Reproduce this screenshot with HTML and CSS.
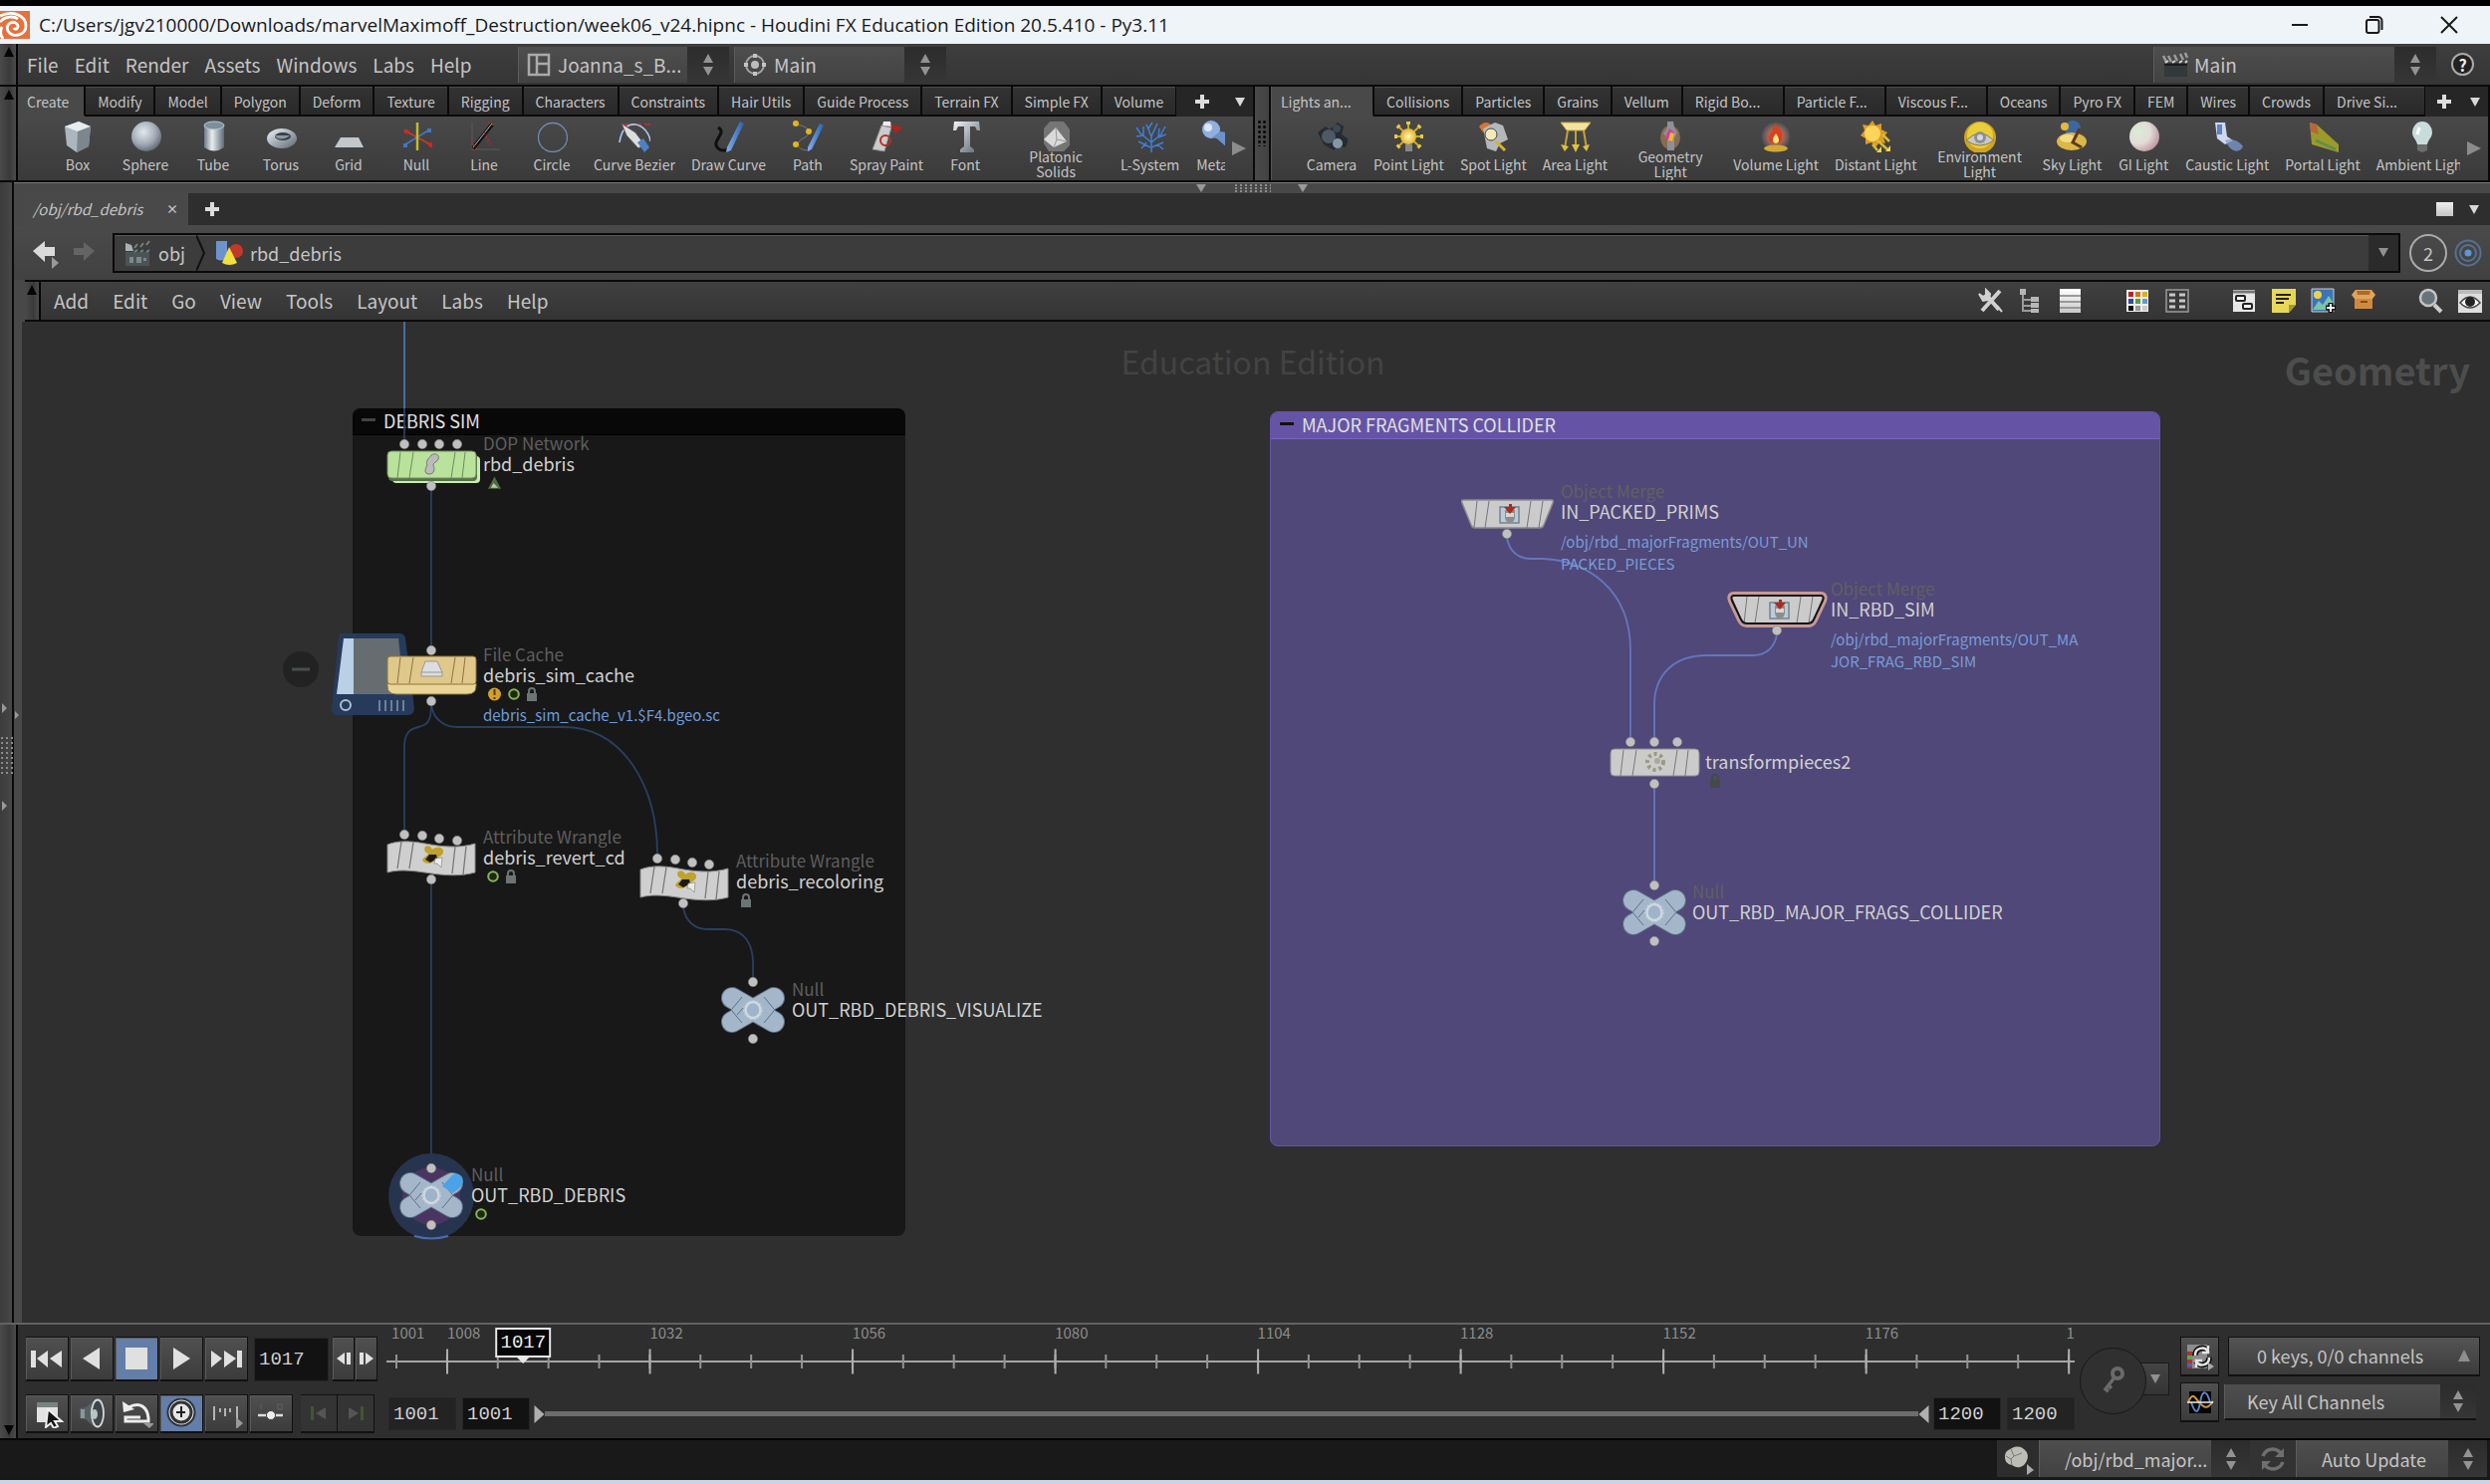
FILE: index.html
```html
<!DOCTYPE html>
<html lang="en">
<head>
<meta charset="utf-8">
<title>Houdini FX Education Edition</title>
<link rel="stylesheet" href="styles.css">
</head>
<body>
<svg class="defs" aria-hidden="true">
  <defs>
    <linearGradient id="gSteel" x1="0" y1="0" x2="1" y2="1"><stop offset="0" stop-color="#f2f4f6"/><stop offset=".5" stop-color="#a4adb6"/><stop offset="1" stop-color="#5d666f"/></linearGradient>
    <radialGradient id="gBall" cx=".4" cy=".35" r=".7"><stop offset="0" stop-color="#e3e8ee"/><stop offset=".6" stop-color="#a0a9b4"/><stop offset="1" stop-color="#5c646e"/></radialGradient>
    <linearGradient id="gTube" x1="0" x2="1"><stop offset="0" stop-color="#6d7a86"/><stop offset=".4" stop-color="#e8eef2"/><stop offset="1" stop-color="#5e6a76"/></linearGradient>
    <linearGradient id="gPen" x1="0" x2="1"><stop offset="0" stop-color="#7fb0ee"/><stop offset="1" stop-color="#2c5fae"/></linearGradient>
    <radialGradient id="gSun" r=".6"><stop offset="0" stop-color="#fff6b0"/><stop offset="1" stop-color="#dca818"/></radialGradient>
    <radialGradient id="gGlow" r=".5"><stop offset="0" stop-color="#ffe0a0"/><stop offset=".5" stop-color="#c86a50" stop-opacity=".8"/><stop offset="1" stop-color="#99a" stop-opacity="0"/></radialGradient>
    <radialGradient id="gGi" cx=".3" cy=".35" r=".8"><stop offset="0" stop-color="#dcebd6"/><stop offset=".5" stop-color="#e2dcd8"/><stop offset="1" stop-color="#b78c92"/></radialGradient>
    <linearGradient id="gPage" x1="0" y1="0" x2="0" y2="1"><stop offset="0" stop-color="#fff"/><stop offset="1" stop-color="#c8c8c8"/></linearGradient>
    <symbol id="updown" viewBox="0 0 12 24"><path d="M1 10L6 1l5 9z M1 14l5 9 5-9z" fill="#939393"/></symbol>
    <symbol id="slate" viewBox="0 0 28 28"><path d="M3 12h23v14H3z" fill="#33393a"/><path d="M3 14h23" stroke="#1c1c1c" stroke-width="2"/><path d="M2 5l3 6M7 5l3 6M13 4l3 6M19 3l3 6M24 2l2 5" stroke="#9c9c9c" stroke-width="2.500"/><path d="M4 12l3-2M11 12l3-2M18 12l3-2M24 12l2-2" stroke="#d2d2d2" stroke-width="2"/></symbol>
    <symbol id="scene" viewBox="0 0 28 28"><path d="M2 13h24v14H2z" fill="#4a5355"/><path d="M6 18h4v6H6zM13 18h5v6h-5zM20 19h3v3h-3z" fill="#7e888b"/><path d="M2 4l6 2 2 6H2z" fill="#a9b1b4"/><path d="M11 9l3-4M17 8l3-4M23 6l3-4M11 13l3-2M17 13l3-2M23 13l3-2" stroke="#77807f" stroke-width="2"/></symbol>
    <symbol id="lock" viewBox="0 0 12 14"><path d="M3 7V4a3 3 0 0 1 6 0v3" fill="none" stroke="currentColor" stroke-width="2"/><path d="M1 6h10v8H1z" fill="currentColor"/></symbol>
    <symbol id="ring" viewBox="0 0 12 14"><circle cx="6" cy="7" r="4.800" fill="#1d2a12" stroke="#87b45a" stroke-width="2"/></symbol>
    <g id="dot"><circle r="4.700" fill="#c0c0c0" stroke="#777" stroke-width=".5"/></g>
    <g id="nullnode">
      <path d="M-21-12L21 12M-21 12L21-12" stroke="#5d7186" stroke-width="22" stroke-linecap="round"/>
      <path d="M-21-12L21 12M-21 12L21-12" stroke="#a4b6ca" stroke-width="20" stroke-linecap="round"/>
      <path d="M-21-1l10-12M-16 5l6-7M21-1l-10-12M-21 1l10 12M21 1l-10 12" stroke="#5d7186" stroke-width="1"/>
      <ellipse rx="7.500" ry="8" fill="#9db4cb" stroke="#d0d8df" stroke-width="2.500"/>
      <circle r="9.500" fill="none" stroke="#c4ced8" stroke-width="1" stroke-dasharray="2 2"/>
    </g>
    <g id="plate">
      <path d="M0 3C10-1 22-1 38 2s34 5 50 0v29c-14 4-30 3-44 1S14 27 0 31z" fill="#cfcfcf" stroke="#888" stroke-width="1"/>
      <path d="M14 0l-4 27M26 1l-4 26M68 5l-3 27M79 5l-3 28" stroke="#777" stroke-width="1.300"/>
      <path d="M38 5c3-2 6 0 7 3 5-4 12-2 11 3-1 4-6 4-8 7-3 5-10 5-13 1 1-4 5-4 6-7-3-1-5-4-3-7z" fill="#bfa12c"/><path d="M38 18l4-5 7 0 1 4-7 4z" fill="#1c1a10"/><path d="M48 17l7-1-1 10-4-4-3 0z" fill="#ececec" stroke="#888" stroke-width=".7"/>
    </g>
    <g id="merge">
      <path d="M2 0h89q2 0 1 3l-9 22q-1 3-4 3H14q-3 0-4-3L1 3Q0 0 2 0z" fill="#cbcbcb" stroke="#8c8c8c" stroke-width="1.500"/>
      <path d="M16 1l-3 27M28 1l-4 27M70 1l-4 27M82 1l-4 27" stroke="#777"/>
      <path d="M39 7h19v16H39z" fill="#bccbd4" stroke="#6f8794" stroke-width="1.500"/><path d="M44 10h10v8q-1 5-5 5t-5-5z" fill="#8d8d8d"/><path d="M45 13h8v4h-8z" fill="#d6d6d6"/><path d="M48 4v3h-5l6 7 6-7h-4V4z" fill="#b3281c"/>
    </g>
  </defs>
</svg>

<header class="titlebar">
  <svg class="app-logo" viewBox="0 0 30 28"><path d="M0 0h30v28H0z" fill="#e8703a"/><path d="M0 5C12-1 26 4 26 15c0 9-13 13-18 5-3-7 5-11 9-7 3 4-2 7-3 4M0 11c5-6 14-6 18-3M3 28c-3-4-3-8-1-12" fill="none" stroke="#fff" stroke-width="2.800"/></svg>
  <h1>C:/Users/jgv210000/Downloads/marvelMaximoff_Destruction/week06_v24.hipnc - Houdini FX Education Edition 20.5.410 - Py3.11</h1>
  <div class="window-buttons">
    <button aria-label="Minimize"><svg viewBox="0 0 18 18"><path d="M1 9h16"/></svg></button>
    <button aria-label="Restore"><svg viewBox="0 0 18 18"><rect x="1" y="4" width="12.500" height="13" rx="2"/><path d="M4 1h8.500a4 4 0 0 1 4 4v9"/></svg></button>
    <button aria-label="Close"><svg viewBox="0 0 18 18"><path d="M1 1l16 16M17 1L1 17"/></svg></button>
  </div>
</header>

<div class="row mainmenu">
  <div class="strip"><svg viewBox="0 0 10 10"><path d="M0 10L5 0l5 10z"/></svg></div>
  <nav class="menu"><button>File</button><button>Edit</button><button>Render</button><button>Assets</button><button>Windows</button><button>Labs</button><button>Help</button></nav>
  <div class="combo desktop">
    <svg class="ico24" viewBox="0 0 24 24"><path d="M2 2h20v20H2zM10 2v20M10 11h12" fill="none" stroke="#aaa" stroke-width="2.500"/></svg>
    <select aria-label="Desktop"><option>Joanna_s_B...</option></select><i><svg><use href="#updown"/></svg></i>
  </div>
  <div class="combo radial">
    <svg class="ico24" viewBox="0 0 24 24"><circle cx="12" cy="12" r="9" fill="none" stroke="#a8a8a8" stroke-width="1.800"/><circle cx="12" cy="12" r="4" fill="#bbb"/><path d="M12 1v4M12 19v4M1 12h4M19 12h4" stroke="#c4c4c4" stroke-width="4"/></svg>
    <select aria-label="Radial menu"><option>Main</option></select><i><svg><use href="#updown"/></svg></i>
  </div>
  <div class="combo take">
    <svg class="ico28"><use href="#slate"/></svg>
    <select aria-label="Take"><option>Main</option></select><i><svg><use href="#updown"/></svg></i>
  </div>
  <button class="help" aria-label="Help">?</button>
</div>

<div class="row shelves">
  <div class="strip"><svg viewBox="0 0 10 10"><path d="M0 10L5 0l5 10z"/></svg></div>
  <section class="shelf left">
    <div class="tabs">
      <button class="on">Create</button><button>Modify</button><button>Model</button><button>Polygon</button><button>Deform</button><button>Texture</button><button>Rigging</button><button>Characters</button><button>Constraints</button><button>Hair Utils</button><button>Guide Process</button><button>Terrain FX</button><button>Simple FX</button><button>Volume</button>
      <button class="add" aria-label="Add shelf"><svg viewBox="0 0 16 16"><path d="M8 1v14M1 8h14"/></svg></button><button class="more" aria-label="Shelf menu"><svg viewBox="0 0 10 9"><path d="M0 0h10L5 9z"/></svg></button>
    </div>
    <div class="tools">
      <div class="toolrow">
        <button><svg viewBox="0 0 32 32"><path d="M3 6l14-5 12 5-2 20-12 6L5 25z" fill="#aeb6bd"/><path d="M3 6l14-5 12 5-13 5z" fill="#e8ecef"/><path d="M16 11l13-5-2 20-12 6z" fill="#7c868e"/></svg><span>Box</span></button>
        <button><svg viewBox="0 0 32 32"><circle cx="17" cy="16" r="15" fill="url(#gBall)"/></svg><span>Sphere</span></button>
        <button><svg viewBox="0 0 32 32"><path d="M7 5v22q10 7 20 0V5z" fill="url(#gTube)"/><ellipse cx="17" cy="5" rx="10" ry="4" fill="#7d8f9d" stroke="#bcc9d2"/></svg><span>Tube</span></button>
        <button><svg viewBox="0 0 32 32"><ellipse cx="17" cy="18" rx="15" ry="10" fill="url(#gSteel)"/><ellipse cx="18" cy="16" rx="8" ry="4" fill="#3a4048"/><path d="M10 15c3 6 12 3 15 0" fill="#8f99a4"/></svg><span>Torus</span></button>
        <button><svg viewBox="0 0 32 32"><path d="M8 17h18l5 10H2z" fill="#c3c7ca"/></svg><span>Grid</span></button>
        <button><svg viewBox="0 0 32 32"><path d="M6 11l24 13" stroke="#c93a2c" stroke-width="1.800"/><path d="M5 24L28 10" stroke="#3f78c8" stroke-width="1.800"/><path d="M17 2v28" stroke="#c2ba28" stroke-width="2.500"/><path d="M4 10l4 2M29 23l3 3" stroke="#d8281c" stroke-width="4"/><path d="M3 25h4M27 10h4" stroke="#3f78c8" stroke-width="4"/></svg><span>Null</span></button>
        <button><svg viewBox="0 0 32 32"><path d="M4 2v27h28" stroke="#5a5a5a" fill="none"/><path d="M5 28L24 4" stroke="#111" stroke-width="4"/><path d="M5 27L24 3" stroke="#bbb" stroke-width="1"/><path d="M3 21l6 8M16 12l7 13M20 2l7 3" stroke="#b42a24" stroke-width="1.500" stroke-dasharray="2 2"/></svg><span>Line</span></button>
        <button><svg viewBox="0 0 32 32"><circle cx="17" cy="17" r="14.500" fill="none" stroke="#7289b4" stroke-width="1.300"/></svg><span>Circle</span></button>
        <button><svg viewBox="0 0 32 32"><path d="M4 4h28" stroke="#c03028" stroke-width="1.500" stroke-dasharray="8 3"/><path d="M1 22C3 8 10 3 17 4s14 8 15 17" fill="none" stroke="#a9c8f0" stroke-width="1.600"/><path d="M3 3l14 9 9 12-6 4L8 15z" fill="#ddd" stroke="#555"/><path d="M19 22l6-4 6 9-5 5z" fill="#4d80c8"/></svg><span>Curve Bezier</span></button>
        <button><svg viewBox="0 0 32 32"><path d="M6 7c10 6-8 13 0 21 3 3 6 2 9 2" fill="none" stroke="#101010" stroke-width="3"/><path d="M28 1l4 2-13 27-5 2 1-5z" fill="url(#gPen)"/></svg><span>Draw Curve</span></button>
        <button><svg viewBox="0 0 32 32"><path d="M5 4c16 3 14 10 8 13-11 5-8 13 4 13" fill="none" stroke="#777"/><circle cx="4" cy="3" r="3" fill="#e3b51d"/><circle cx="17" cy="11" r="3" fill="#e3b51d"/><circle cx="4" cy="24" r="3" fill="#e3b51d"/><path d="M28 3l4 2-12 24-4 2v-4z" fill="url(#gPen)"/></svg><span>Path</span></button>
        <button><svg viewBox="0 0 32 32"><path d="M11 5l10 2-7 24-12-2z" fill="#ccc" stroke="#888"/><path d="M13 1h7l1 5-9-1z" fill="#eee"/><path d="M20 4l12 3-7 6z" fill="#b3211b"/><circle cx="15" cy="20" r="5" fill="none" stroke="#b3302a" stroke-width="2"/></svg><span>Spray Paint</span></button>
        <button><svg viewBox="0 0 32 32"><path d="M5 1h25l1 9h-3l-2-4h-5v20l4 3v3H11v-3l4-3V6H9l-2 4H4z" fill="url(#gSteel)"/></svg><span>Font</span></button>
        <button class="w114"><svg viewBox="0 0 32 32"><path d="M10 1h14l6 8v16l-6 6H9l-5-8V8z" fill="#757575"/><path d="M16 7l11 14-13 6-10-8z" fill="#dadada"/><path d="M16 7l1 12 10 2M17 19l-3 8" stroke="#999" fill="none"/></svg><span>Platonic<br>Solids</span></button>
        <button><svg viewBox="0 0 32 32"><path d="M17 32V14M17 22L5 12M17 22l11-9M17 16l-5-12M17 16l6-13M9 15l-7 1M9 15V6M24 17l8-3M24 17l1-9M16 27L4 21M17 27l12-5M14 8l4-6M6 13L2 7M27 13l4-7M12 22l-5 6M23 24l6 5" stroke="#3f7fd8" stroke-width="1.500" fill="none"/></svg><span>L-System</span></button>
        <button class="w50"><svg viewBox="0 0 32 32"><circle cx="15" cy="9" r="9" fill="#8fb0e0"/><circle cx="12" cy="7" r="4" fill="#dce8f8"/><path d="M16 17c6 0 8 5 14 9V12l-6-1z" fill="#6d92cc"/></svg><span>Meta</span></button>
      </div>
      <button class="scroll" aria-label="Scroll tools"><svg viewBox="0 0 14 14"><path d="M0 0l14 7-14 7z"/></svg></button>
    </div>
  </section>
  <div class="gripbar"></div>
  <section class="shelf right">
    <div class="tabs">
      <button class="on elided">Lights an...</button><button>Collisions</button><button>Particles</button><button>Grains</button><button>Vellum</button><button class="elided">Rigid Bo...</button><button class="elided">Particle F...</button><button class="elided">Viscous F...</button><button>Oceans</button><button>Pyro FX</button><button>FEM</button><button>Wires</button><button>Crowds</button><button class="elided">Drive Si...</button>
      <button class="add" aria-label="Add shelf"><svg viewBox="0 0 16 16"><path d="M8 1v14M1 8h14"/></svg></button><button class="more" aria-label="Shelf menu"><svg viewBox="0 0 10 9"><path d="M0 0h10L5 9z"/></svg></button>
    </div>
    <div class="tools">
      <div class="toolrow">
        <button><svg viewBox="0 0 32 32"><path d="M2 12l8-6 4 3 8-7 6 4-2 8 7 5-3 8-8-1-4 4-10-6z" fill="#242b33"/><circle cx="13" cy="16" r="7" fill="#4d5964"/><circle cx="22" cy="23" r="5" fill="#8398a6"/><circle cx="21" cy="8" r="4" fill="#3d4852"/></svg><span>Camera</span></button>
        <button><svg viewBox="0 0 32 32"><path d="M16 2v28M3 16h27M6 6l21 20M27 6L6 26" stroke="#cda92a" stroke-width="2"/><path d="M16 1v3M2 16h3M28 16h3M5 5l2 2M28 5l-2 2M5 27l2-2M28 27l-2-2" stroke="#e6c84a" stroke-width="4"/><circle cx="16" cy="16" r="8" fill="url(#gSun)"/><path d="M13 24h7v7h-7z" fill="#888"/></svg><span>Point Light</span></button>
        <button><svg viewBox="0 0 32 32"><path d="M2 6q6-7 12-2l-8 8z" fill="#d8742a"/><path d="M6 8l12-6 8 3 5 14-8 4-4 8-9-3z" fill="#b5b8ba"/><circle cx="14" cy="14" r="6" fill="#f5e9b8" stroke="#444"/><path d="M19 21l9 9" stroke="#d7b425" stroke-width="3"/></svg><span>Spot Light</span></button>
        <button><svg viewBox="0 0 32 32"><path d="M2 2h30l-6 8H8z" fill="#f4e3a0" stroke="#c8a23a"/><path d="M9 10L6 28M17 10v20M25 10l3 18" stroke="#c1a336" stroke-width="2"/><path d="M2 24l4 7 4-5zM13 24l4 8 4-8zM24 26l4 5 3-7z" fill="#e0c13a"/></svg><span>Area Light</span></button>
        <button class="w110"><svg viewBox="0 0 32 32"><ellipse cx="16" cy="17" rx="10" ry="12" fill="#b3895e" opacity=".6"/><path d="M13 1h6l1 6 3 5-3 6v12h-7V18l-4-5 4-6z" fill="#8f8f98"/><path d="M15 8l5 4-3 10-6-5z" fill="#d63f9a"/><path d="M16 12l4 1-2 8-4-1z" fill="#f0b92a"/></svg><span>Geometry<br>Light</span></button>
        <button><svg viewBox="0 0 32 32"><circle cx="16" cy="16" r="15" fill="url(#gGlow)"/><path d="M15 3c6 6 9 11 7 16-1 5-11 6-13 0-1-6 5-8 6-16z" fill="#d8401e"/><path d="M16 13c3 4 5 9 0 10-5-1-3-6 0-10z" fill="#fbe082"/><ellipse cx="16" cy="28" rx="12" ry="3.500" fill="#d5a835"/></svg><span>Volume Light</span></button>
        <button><svg viewBox="0 0 32 32"><path d="M13 0l3 5 6-2v6l6 3-4 5 2 6-6-1-4 5-4-5-6 2v-6l-5-3 4-5-2-6 6 1z" fill="#dd9d22"/><circle cx="13" cy="13" r="8" fill="#ffd45a"/><path d="M23 14l7 7M18 20l10 9M13 24l5 6" stroke="#d9bd32" stroke-width="2.500"/><path d="M26 31h5v-6zM17 32h5v-6z" fill="#eed552"/></svg><span>Distant Light</span></button>
        <button class="w110"><svg viewBox="0 0 32 32"><circle cx="16" cy="17" r="16" fill="#cfa420"/><circle cx="16" cy="15" r="13" fill="#e8cf3a"/><path d="M2 20q14-14 28 0-14 10-28 0z" fill="#c9c9c9" stroke="#8a7a30"/><circle cx="16" cy="17" r="6" fill="#8e8e96"/><circle cx="16" cy="17" r="3" fill="#d2d8e0"/></svg><span>Environment<br>Light</span></button>
        <button><svg viewBox="0 0 32 32"><circle cx="17" cy="8" r="8" fill="#3b68a2"/><circle cx="9" cy="6" r="4" fill="#e8b93a"/><ellipse cx="16" cy="21" rx="15" ry="9" fill="#dbb648"/><ellipse cx="12" cy="18" rx="8" ry="4" fill="#f3dc86"/><path d="M24 8l-7 14 9 5" stroke="#5d3a1c" stroke-width="3" fill="none"/></svg><span>Sky Light</span></button>
        <button><svg viewBox="0 0 32 32"><circle cx="17" cy="16" r="15" fill="url(#gGi)"/></svg><span>GI Light</span></button>
        <button><svg viewBox="0 0 32 32"><path d="M4 2h10l2 14 6 4-8 4-8-6z" fill="#cdd9f0"/><path d="M6 4h5v10H6z" fill="#5e80c8"/><path d="M14 20c8-3 15 2 18 6-3 7-12 7-18-6z" fill="#7e9bd0" opacity=".75"/></svg><span>Caustic Light</span></button>
        <button><svg viewBox="0 0 32 32"><path d="M3 2l7 2 22 20v8L5 24z" fill="#9c9a2a"/><path d="M3 2l7 2 2 10-8-3z" fill="#b5673a"/><path d="M9 20l20 9" stroke="#5f8f4a" stroke-width="3"/></svg><span>Portal Light</span></button>
        <button><svg viewBox="0 0 32 32"><path d="M6 12a10 11 0 0 1 20 0c0 5-4 7-5 12h-10c-1-5-5-7-5-12z" fill="#c9dcdc"/><path d="M13 7l-2 7" stroke="#fff" stroke-width="3"/><path d="M11 24h10v6l-5 2-5-2z" fill="#6c6c6c"/></svg><span>Ambient Light</span></button>
      </div>
      <button class="scroll" aria-label="Scroll tools"><svg viewBox="0 0 14 14"><path d="M0 0l14 7-14 7z"/></svg></button>
    </div>
  </section>
</div>

<main class="work">
  <aside class="edge">
    <svg viewBox="0 0 22 120"><path d="M2 10l5 5-5 5zM15 18l4 4-4 4zM2 108l5 5-5 5z" fill="#999"/><path d="M1 45h12M1 50h12M1 55h12M1 60h12M1 65h12M1 70h12M1 75h12M1 80h12" stroke="#8a8a8a" stroke-width="2" stroke-dasharray="2 3"/></svg>
  </aside>
  <section class="pane">
    <div class="splitter"><svg viewBox="0 0 112 10"><path d="M0 1h10L5 9zM102 1h10l-5 8z" fill="#999"/><path d="M39 2h36M39 5h36M39 8h36" stroke="#8d8d8d" stroke-width="2" stroke-dasharray="2 3"/></svg></div>
    <div class="panetabs">
      <button class="panetab"><em>/obj/rbd_debris</em><b>×</b></button>
      <button class="add" aria-label="New tab"><svg viewBox="0 0 16 16"><path d="M8 1v14M1 8h14"/></svg></button>
      <span class="grow"></span>
      <button class="maxi" aria-label="Maximize pane"></button><button class="more" aria-label="Pane menu"><svg viewBox="0 0 10 9"><path d="M0 0h10L5 9z"/></svg></button>
    </div>
    <div class="pathbar">
      <button class="nav" aria-label="Back"><svg viewBox="0 0 32 32"><path d="M1 14L13 4v6h10v9H13v6z" fill="#dadada"/><path d="M20 20l7 6-7 6z" fill="#999"/></svg></button>
      <button class="nav" aria-label="Forward"><svg viewBox="0 0 32 32"><path d="M22 14L11 5v6H1v7h10v6z" fill="#646464"/></svg></button>
      <div class="path">
        <svg class="ico28"><use href="#scene"/></svg><a href="#obj">obj</a>
        <svg class="chev" viewBox="0 0 10 36"><path d="M0 0l8 18-8 18" fill="none" stroke="#111" stroke-width="2"/></svg>
        <svg class="ico28" viewBox="0 0 28 28"><path d="M1 2h11v18q-6 3-11 0z" fill="#6d93cf"/><circle cx="21" cy="12" r="7" fill="#c0392b"/><path d="M14 8l8 16q-8 4-15 0z" fill="#efe03c"/></svg><a href="#rbd_debris">rbd_debris</a>
        <button class="drop" aria-label="Path history"><svg viewBox="0 0 10 9"><path d="M0 0h10L5 9z"/></svg></button>
      </div>
      <button class="count" aria-label="Link group">2</button>
      <button class="target" aria-label="Follow selection"><svg viewBox="0 0 28 28"><circle cx="14" cy="14" r="12.500" fill="none" stroke="#56718f" stroke-width="2"/><circle cx="14" cy="14" r="8" fill="none" stroke="#56718f" stroke-width="2"/><circle cx="14" cy="14" r="3.500" fill="#5a96d8"/></svg></button>
    </div>
    <div class="netmenu">
      <div class="strip"><svg viewBox="0 0 10 10"><path d="M0 10L5 0l5 10z"/></svg></div>
      <nav class="menu wide"><button>Add</button><button>Edit</button><button>Go</button><button>View</button><button>Tools</button><button>Layout</button><button>Labs</button><button>Help</button></nav>
      <div class="neticons">
        <button aria-label="Tools"><svg viewBox="0 0 26 26"><path d="M4 23L22 3M9 8l12 14" stroke="#d0d0d0" stroke-width="4"/><path d="M1 6l4 3 3-2 0-5 4 4-1 6-6 1zM19 18l5 6" fill="#d0d0d0" stroke="#d0d0d0" stroke-width="2"/></svg></button>
        <button aria-label="Tree"><svg viewBox="0 0 26 26"><path d="M5 4v19h8M5 12h8M5 18h8" stroke="#9a9a9a" stroke-width="2" fill="none"/><path d="M2 1h6v6H2zM13 9h8v5h-8zM13 15h8v5h-8zM13 21h8v4h-8z" fill="#b6b6b6"/></svg></button>
        <button aria-label="List"><svg viewBox="0 0 26 26"><path d="M2 1h21v24H2z" fill="url(#gPage)"/><path d="M2 8h21M2 14h21M2 20h21" stroke="#999" stroke-width="2"/></svg></button>
        <button class="gap" aria-label="Palette"><svg viewBox="0 0 26 26"><path d="M2 2h22v22H2z" fill="#eee"/><path d="M4 4h5v5H4z" fill="#b52828"/><path d="M11 4h5v5h-5z" fill="#d8731e"/><path d="M18 4h5v5h-5z" fill="#d6b324"/><path d="M4 11h5v5H4z" fill="#2a4bb0"/><path d="M11 11h5v5h-5z" fill="#4fa33a"/><path d="M18 11h5v5h-5z" fill="#5e9cd8"/><path d="M4 18h5v5H4z" fill="#111"/><path d="M11 18h5v5h-5z" fill="#999"/><path d="M18 18h5v5h-5z" fill="#ccc"/></svg></button>
        <button aria-label="Shapes"><svg viewBox="0 0 26 26"><path d="M2 2h22v22H2z" fill="#3a3a3a" stroke="#9a9a9a" stroke-width="1.500"/><path d="M5 7h6M15 7h6M5 13h6M15 13h6M5 19h6M15 19h6" stroke="#c8c8c8" stroke-width="3"/></svg></button>
        <button class="gap" aria-label="Network box"><svg viewBox="0 0 26 26"><path d="M2 2h22v22H2z" fill="#e8e8e8"/><path d="M2 4h22" stroke="#777" stroke-width="3"/><rect x="5" y="8" width="9" height="5" rx="1" fill="#fff" stroke="#222" stroke-width="2"/><rect x="12" y="16" width="9" height="5" rx="1" fill="#fff" stroke="#222" stroke-width="2"/></svg></button>
        <button aria-label="Sticky note"><svg viewBox="0 0 26 26"><path d="M1 1h24v16l-7 8H1z" fill="#e6d858"/><path d="M18 25v-8h7z" fill="#a8963a"/><path d="M5 7h15M5 11h13M5 15h8" stroke="#222" stroke-width="2"/></svg></button>
        <button aria-label="Background image"><svg viewBox="0 0 26 26"><path d="M1 1h22v23H1z" fill="#3c74b8" stroke="#ccc"/><circle cx="7" cy="7" r="4" fill="#ecd34a"/><path d="M2 22l6-9 4 4 6-9 5 8v6z" fill="#79c5a8"/><path d="M20 15v10M15 20h10" stroke="#111" stroke-width="5"/><path d="M20 16v8M16 20h8" stroke="#fff" stroke-width="2"/></svg></button>
        <button aria-label="Asset box"><svg viewBox="0 0 26 26"><path d="M4 8h18v13H4z" fill="#d08a3e"/><path d="M1 7l4-5h16l4 5-3 4H4z" fill="#e2a45c"/><path d="M6 3h14l-1 4H7z" fill="#a86c2c"/><path d="M10 14h7" stroke="#7c4d1c" stroke-width="2"/></svg></button>
        <button class="gap" aria-label="Find"><svg viewBox="0 0 26 26"><path d="M17 17l7 7" stroke="#ccc" stroke-width="4"/><circle cx="11" cy="10" r="8" fill="#69737c" stroke="#c4c4c4" stroke-width="2.500"/></svg></button>
        <button aria-label="Display options"><svg viewBox="0 0 26 26"><path d="M1 2h24v23H1z" fill="#dedede"/><path d="M1 2h24v4H1z" fill="#bbb"/><path d="M3 15q10-12 20 0-10 10-20 0z" fill="#fff" stroke="#444" stroke-width="1.500"/><circle cx="13" cy="14" r="5" fill="#222"/></svg></button>
      </div>
    </div>

    <div class="canvas">
      <div class="watermark center">Education Edition</div>
      <div class="watermark corner">Geometry</div>

      <section class="netbox debris"><h2><i></i>DEBRIS SIM</h2></section>
      <section class="netbox major"><h2><i></i>MAJOR FRAGMENTS COLLIDER</h2></section>

      <svg class="graph" viewBox="22 323 2478 1005">
        <circle cx="302" cy="672" r="18" fill="#222"/><path d="M293 672h18" stroke="#47504f" stroke-width="3"/>
        <g fill="none" stroke-width="1.800">
          <path d="M406 323v87" stroke="#4a76ad"/>
          <g stroke="#2a3f60">
            <path d="M406 410v33M433 491v158M433 886v284"/>
            <path d="M433 708c0 16-4 20-13 22-10 2-14 8-14 20v85"/>
            <path d="M433 708c2 14 13 22 26 22h107c60 0 94 60 94 128"/>
            <path d="M686 911c2 14 12 22 24 22h18c20 0 28 16 28 34v16"/>
          </g>
          <g stroke="#6575bd">
            <path d="M1513 540c2 12 10 21 24 21h12c44 2 88 30 88 92v90"/>
            <path d="M1784 637c-2 12-10 21-24 21h-46c-34 0-53 20-53 50v35"/>
            <path d="M1661 791v94"/>
          </g>
        </g>
        <circle cx="433" cy="1201" r="43" fill="#26344f"/><path d="M416 1241q17 5 34 0-17 5-34 0z" fill="#4a6bb8" stroke="#4a6bb8" stroke-width="2"/><circle cx="433" cy="1201" r="29" fill="#4a3560"/>
        <g>
          <path d="M343 636h58q5 0 6 5l9 70q0 7-7 7h-70q-7 0-6-7l7-70q0-5 3-5z" fill="#263b5c"/>
          <path d="M346 641h54l6 56h-68z" fill="#666d70"/><path d="M345 641h10v56h-17z" fill="#b9d0e6"/>
          <ellipse cx="347" cy="708" rx="5" ry="5" fill="none" stroke="#a9bfd2" stroke-width="2"/>
          <path d="M381 703v11M387 703v11M393 703v11M399 703v11M405 703v11" stroke="#6e8095" stroke-width="2"/>
        </g>
        <g>
          <rect x="394" y="458" width="88" height="27" rx="4" fill="#c9eeb0"/>
          <rect x="390" y="455" width="89" height="28" rx="4" fill="#59704d"/>
          <rect x="389" y="453" width="89" height="27" rx="4" fill="#b9e29b" stroke="#6e8c5d"/>
          <path d="M402 454l-3 26M415 454l-4 26M457 454l-4 26M467 454l-3 26" stroke="#6e8c5d"/>
          <path d="M433 457c4-3 9 0 7 4-1 3-5 3-5 6 2 4 1 9-4 9-6 0-4-6-2-9-2-4 1-6 4-10z" fill="#bbb" stroke="#777"/>
        </g>
        <g>
          <path d="M389 686h89v3q0 8-9 8h-71q-9 0-9-8z" fill="#ead694" stroke="#8a7443"/>
          <rect x="389" y="659" width="89" height="28" rx="3" fill="#dfc88a" stroke="#8a7443"/>
          <path d="M402 660l-3 26M415 660l-4 26M457 660l-4 26M467 660l-3 26" stroke="#8a7443"/>
          <path d="M427 664h12l5 11v4h-21v-4z" fill="#ddd" stroke="#999"/><path d="M423 675h21" stroke="#999"/>
        </g>
        <use href="#plate" x="389" y="845"/><use href="#plate" x="643" y="870"/>
        <use href="#nullnode" x="756" y="1014"/><use href="#nullnode" x="433" y="1200"/>
        <path d="M444 1191l10-11q6-4 10 2 3 6-4 12l-5 4z" fill="#4aa3e8"/>
        <use href="#merge" x="1467" y="502"/>
        <path d="M1741 598h87q4 0 2 5l-9 19q-2 4-6 4h-61q-4 0-6-4l-9-19q-2-5 2-5z" fill="none" stroke="#c69a96" stroke-width="8"/>
        <use href="#merge" x="1738" y="598"/>
        <path d="M1741 598h87q4 0 2 5l-9 19q-2 4-6 4h-61q-4 0-6-4l-9-19q-2-5 2-5z" fill="none" stroke="#151515" stroke-width="2"/>
        <rect x="1617" y="752" width="89" height="27" rx="4" fill="#cbcbcb" stroke="#8c8c8c"/>
        <path d="M1630 753l-3 26M1643 753l-4 26M1684 753l-4 26M1695 753l-3 26" stroke="#777"/>
        <circle cx="1662" cy="765" r="8" fill="none" stroke="#9a9a80" stroke-width="4" stroke-dasharray="3 3"/><circle cx="1664" cy="764" r="3" fill="#aaa99c"/>
        <use href="#nullnode" x="1661" y="916"/>
        <use href="#dot" x="406" y="446"/><use href="#dot" x="424" y="446"/><use href="#dot" x="441" y="446"/><use href="#dot" x="459" y="446"/><use href="#dot" x="433" y="488"/>
        <use href="#dot" x="433" y="653"/><use href="#dot" x="433" y="704"/>
        <use href="#dot" x="406" y="838"/><use href="#dot" x="424" y="839"/><use href="#dot" x="441" y="842"/><use href="#dot" x="459" y="844"/><use href="#dot" x="433" y="883"/>
        <use href="#dot" x="660" y="862"/><use href="#dot" x="678" y="863"/><use href="#dot" x="695" y="866"/><use href="#dot" x="712" y="868"/><use href="#dot" x="686" y="907"/>
        <use href="#dot" x="756" y="986"/><use href="#dot" x="756" y="1043"/><use href="#dot" x="433" y="1173"/><use href="#dot" x="433" y="1230"/>
        <use href="#dot" x="1513" y="536"/><use href="#dot" x="1784" y="633"/>
        <use href="#dot" x="1637" y="745"/><use href="#dot" x="1661" y="745"/><use href="#dot" x="1684" y="745"/><use href="#dot" x="1661" y="787"/>
        <use href="#dot" x="1661" y="889"/><use href="#dot" x="1661" y="945"/>
      </svg>

      <div class="node n-dop"><small>DOP Network</small><strong>rbd_debris</strong><span class="badges"><svg viewBox="0 0 16 14" class="tri"><path d="M8 0l7 13H1z" fill="#4f6b3f"/><path d="M4 12l3-5 2 2 3 3" fill="#b9c9a5"/></svg></span></div>
      <div class="node n-cache"><small>File Cache</small><strong>debris_sim_cache</strong><span class="badges"><svg viewBox="0 0 14 14" class="warn"><circle cx="7" cy="7" r="6.500" fill="#d3a02c"/><path d="M7 2v6M7 10v2" stroke="#5d3d08" stroke-width="2"/></svg><svg><use href="#ring"/></svg><svg class="lk"><use href="#lock"/></svg></span><a href="#cache">debris_sim_cache_v1.$F4.bgeo.sc</a></div>
      <div class="node n-revert"><small>Attribute Wrangle</small><strong>debris_revert_cd</strong><span class="badges"><svg><use href="#ring"/></svg><svg class="lk"><use href="#lock"/></svg></span></div>
      <div class="node n-recolor"><small>Attribute Wrangle</small><strong>debris_recoloring</strong><span class="badges"><svg class="lk"><use href="#lock"/></svg></span></div>
      <div class="node n-vis"><small>Null</small><strong>OUT_RBD_DEBRIS_VISUALIZE</strong></div>
      <div class="node n-out"><small>Null</small><strong>OUT_RBD_DEBRIS</strong><span class="badges"><svg><use href="#ring"/></svg></span></div>
      <div class="node n-packed dim"><small>Object Merge</small><strong>IN_PACKED_PRIMS</strong><a class="spaced" href="#packed">/obj/rbd_majorFragments/OUT_UN<br>PACKED_PIECES</a></div>
      <div class="node n-sim dim"><small>Object Merge</small><strong>IN_RBD_SIM</strong><a class="spaced" href="#sim">/obj/rbd_majorFragments/OUT_MA<br>JOR_FRAG_RBD_SIM</a></div>
      <div class="node n-pieces dim"><strong>transformpieces2</strong><span class="badges"><svg class="lk"><use href="#lock"/></svg></span></div>
      <div class="node n-coll dim"><small>Null</small><strong>OUT_RBD_MAJOR_FRAGS_COLLIDER</strong></div>
    </div>
  </section>
</main>

<footer class="row playbar">
  <div class="strip bottom"><svg viewBox="0 0 10 10"><path d="M0 0l5 10 5-10z"/></svg></div>
  <div class="controls">
    <div class="line one">
      <div class="group">
        <button aria-label="First frame"><svg viewBox="0 0 34 22"><path d="M1 3h5v17H1zM18 3v17L7 11zM32 3v17L20 11z"/></svg></button>
        <button aria-label="Play backward"><svg viewBox="0 0 34 22"><path d="M25 0v22L8 11z"/></svg></button>
        <button class="blue" aria-label="Stop"><svg viewBox="0 0 34 22"><path d="M6 0h22v22H6z"/></svg></button>
        <button aria-label="Play"><svg viewBox="0 0 34 22"><path d="M9 0v22l17-11z"/></svg></button>
        <button aria-label="Last frame"><svg viewBox="0 0 34 22"><path d="M28 3h5v17h-5zM2 3v17l11-9zM15 3v17l12-9z"/></svg></button>
      </div>
      <input class="num cur" aria-label="Current frame" value="1017">
      <div class="group half">
        <button aria-label="Previous key"><svg viewBox="0 0 14 14"><path d="M8 1v12L0 7zM10 1h4v12h-4z"/></svg></button>
        <button aria-label="Next key"><svg viewBox="0 0 14 14"><path d="M6 1v12l8-6zM0 1h4v12H0z"/></svg></button>
      </div>
      <div class="timeline">
        <svg viewBox="0 0 1694 44" preserveAspectRatio="none"><path d="M0 22h1694" stroke="#a5a5a5" stroke-width="2"/><path d="M9 22h1685" stroke="#939393" stroke-width="14" stroke-dasharray="2 48.850"/><path d="M60 22h1634" stroke="#b0b0b0" stroke-width="25" stroke-dasharray="2 201.400"/></svg>
        <span style="left:0.3%">1001</span><span style="left:3.6%">1008</span><span style="left:15.6%">1032</span><span style="left:27.6%">1056</span><span style="left:39.6%">1080</span><span style="left:51.6%">1104</span><span style="left:63.6%">1128</span><span style="left:75.6%">1152</span><span style="left:87.6%">1176</span><span style="left:99.5%">1</span>
        <output class="marker" style="left:8.1%">1017</output>
      </div>
    </div>
    <div class="line two">
      <div class="group">
        <button aria-label="Scoped keys"><svg viewBox="0 0 34 30"><path d="M7 4h21v20H7z" fill="#e2e2e2"/><path d="M7 4h21v5H7z" fill="#7a8280"/><path d="M18 11l14 12-7 0 3 5-4 2-3-5-5 4z" fill="#151515" stroke="#eee" stroke-width="2"/></svg></button>
        <button aria-label="Audio"><svg viewBox="0 0 34 30"><path d="M5 10l6-1 9-7v27l-9-8-6-1z" fill="#566164"/><path d="M6 11h4v9H6z" fill="#8b979a"/><ellipse cx="23" cy="15" rx="6" ry="13.500" fill="#3d4548" stroke="#d4d8da" stroke-width="1.800"/><ellipse cx="20" cy="16" rx="3" ry="5" fill="#b9c2c5"/></svg></button>
        <button aria-label="Loop"><svg viewBox="0 0 34 30"><path d="M9 9c12-6 19 0 20 11v3H6v-4h15" fill="none" stroke="#eee" stroke-width="3"/><path d="M3 3l1 11 11-3z" fill="#eee"/><path d="M24 25h11l-5 5z" fill="#999"/></svg></button>
        <button class="blue" aria-label="Real time"><svg viewBox="0 0 34 30"><circle cx="17" cy="14" r="13.500" fill="#e8e8e8" stroke="#2b3440" stroke-width="2"/><circle cx="17" cy="14" r="10" fill="#e6e6e6" stroke="#333" stroke-width="3"/><path d="M17 8v11M12 14h9" stroke="#222" stroke-width="2"/></svg></button>
        <button aria-label="Range"><svg viewBox="0 0 34 30"><path d="M5 8v14M11 10v4M16 10v8M21 10v4M28 8v14" stroke="#b4b4b4" stroke-width="2"/><path d="M27 19l7 6-7 6z" fill="#999"/></svg></button>
        <button aria-label="Key options"><svg viewBox="0 0 34 30"><path d="M4 17h25" stroke="#ddd" stroke-width="2.500"/><circle cx="17" cy="17" r="4.500" fill="#eee" stroke="#444"/><path d="M7 6v5M24 6h4v5h-4z" stroke="#555" stroke-width="2" fill="none"/></svg></button>
      </div>
      <div class="group faint">
        <button aria-label="Previous range"><svg viewBox="0 0 16 14"><path d="M0 0h3v14H0z" fill="#45552f"/><path d="M15 1v12L5 7z" fill="#555"/></svg></button>
        <button aria-label="Next range"><svg viewBox="0 0 16 14"><path d="M13 0h3v14h-3z" fill="#45552f"/><path d="M1 1v12l10-6z" fill="#555"/></svg></button>
      </div>
      <div class="range">
        <input class="num soft" aria-label="Global start" value="1001"><input class="num" aria-label="Start" value="1001">
        <div class="slider"><svg viewBox="0 0 10 18"><path d="M0 0l10 9-10 9z"/></svg><i></i><svg viewBox="0 0 10 18"><path d="M10 0L0 9l10 9z"/></svg></div>
        <input class="num" aria-label="End" value="1200"><input class="num soft" aria-label="Global end" value="1200">
      </div>
    </div>
  </div>
  <div class="keyer">
    <button class="key" aria-label="Set key"><svg viewBox="0 0 32 32"><circle cx="20" cy="9" r="5" fill="none" stroke="#6a6a6a" stroke-width="4"/><path d="M17 13L7 26M10 20l4 4M7 24l4 3" stroke="#6a6a6a" stroke-width="3.500" fill="none"/></svg></button>
    <button class="keydrop" aria-label="Key menu"><svg viewBox="0 0 10 9"><path d="M0 0h10L5 9z"/></svg></button>
  </div>
  <div class="channels">
    <div class="chrow">
      <button class="sq" aria-label="Channel list"><svg viewBox="0 0 28 28"><path d="M1 2h20v24H1z" fill="#8c8c8c"/><path d="M1 9h5v17H1z" fill="#b53030"/><path d="M1 13h5v4H1z" fill="#54b03c"/><path d="M1 21h5v3H1z" fill="#3c68c8"/><path d="M9 13a7 7 0 0 1 13-4M23 15a7 7 0 0 1-13 4" fill="none" stroke="#111" stroke-width="6"/><path d="M9 13a7 7 0 0 1 13-4M23 15a7 7 0 0 1-13 4M22 3v7h-6M10 25v-7h6" fill="none" stroke="#e4e4e4" stroke-width="2.500"/><path d="M22 20l6 4-6 4z" fill="#aaa"/></svg></button>
      <button class="keys"><span>0 keys, 0/0 channels</span><svg viewBox="0 0 12 12"><path d="M0 12L6 0l6 12z"/></svg></button>
    </div>
    <div class="chrow">
      <button class="sq" aria-label="Channel curves"><svg viewBox="0 0 28 28"><path d="M3 3h22v22H3z" fill="#050505"/><path d="M2 14c5-12 7-4 11 0s7 9 14-1" fill="none" stroke="#d59a35" stroke-width="2"/><path d="M5 14c4 12 7 12 9 0s6-14 10 0" fill="none" stroke="#5d86c8" stroke-width="2"/><path d="M1 14h26" stroke="#eee" stroke-width="1.500"/></svg></button>
      <div class="combo keyall"><select aria-label="Key scope"><option>Key All Channels</option></select><i><svg><use href="#updown"/></svg></i></div>
    </div>
  </div>
</footer>

<div class="status">
  <button class="cook" aria-label="Cook"><svg viewBox="0 0 32 32"><path d="M3 14c0-6 3-7 7-9 6-3 11-1 14 3 4 5 1 11-2 14-5 4-9 2-12 0-5-1-7-4-7-8z" fill="#bdbdb8"/><path d="M4 13l5 3 1 6M9 6l3 7M12 13l8-3M9 16l3-3" stroke="#777" fill="none"/><path d="M25 21l7 6-7 5z" fill="#aaa"/></svg></button>
  <div class="combo obj"><select aria-label="Network path"><option>/obj/rbd_major...</option></select><i><svg><use href="#updown"/></svg></i></div>
  <button class="refresh" aria-label="Refresh"><svg viewBox="0 0 26 24"><path d="M3 9C6 1 16 0 21 6M23 15c-3 8-13 9-18 3" fill="none" stroke="#6f6f6f" stroke-width="3.500"/><path d="M24 1v9h-9zM2 23v-9h9z" fill="#6f6f6f"/></svg></button>
  <div class="combo update"><select aria-label="Update mode"><option>Auto Update</option></select><i><svg><use href="#updown"/></svg></i></div>
</div>
</body>
</html>
```
FILE: styles.css
```css
* { box-sizing: border-box; }
body {
  margin: 0;
  min-height: 100vh;
  display: flex;
  flex-direction: column;
  background: #2e2e2e;
  border-top: 6px solid #000;
  border-bottom: 4px solid #ccd3e2;
  color: #c4c4c4;
  font: 18px/24px "Noto Sans CJK SC", "Noto Sans", sans-serif;
  overflow-x: hidden;
}
button, select, input { font: inherit; color: inherit; background: none; border: 0; margin: 0; padding: 0; border-radius: 0; }
select { appearance: none; }
svg { display: block; flex: none; }
a { color: inherit; text-decoration: none; }
.defs { position: absolute; width: 0; height: 0; }
.row { display: flex; }

.titlebar { display: flex; align-items: center; gap: 9px; height: 38px; background: #eff4f9; color: #1a1a1a; }
.titlebar h1 { margin: 0; flex: 1; font: 19px/24px "Open Sans", sans-serif; white-space: nowrap; }
.app-logo { width: 30px; height: 28px; }
.window-buttons { display: flex; padding-right: 4px; }
.window-buttons button { width: 75px; height: 34px; display: grid; place-items: center; }
.window-buttons svg { width: 18px; height: 18px; fill: none; stroke: #1a1a1a; stroke-width: 2; }

.strip { width: 18px; flex: none; border-right: 2px solid #050505; background: linear-gradient(90deg, #4a4a4a, #3a3a3a 60%, #4c4c4c); padding: 3px 4px; }
.strip svg { width: 10px; height: 10px; fill: #050505; }

.mainmenu { height: 43px; background: linear-gradient(#3e3e3e, #353535); border-bottom: 2px solid #0a0a0a; align-items: stretch; font-size: 19px; }
.menu { display: flex; align-items: center; gap: 16px; padding-left: 9px; font-size: 19px; }
.mainmenu .menu { width: 502px; }
.menu.wide { gap: 24px; padding-left: 13px; }
.combo { display: flex; align-items: center; background: linear-gradient(#4e4e4e, #424242); border-left: 1px solid #5c5c5c; }
.combo select { flex: 1; min-width: 0; height: 100%; }
.combo i { align-self: stretch; width: 42px; display: grid; place-items: center; background: linear-gradient(#2c2c2c, #363636); }
.combo i svg { width: 12px; height: 24px; }
.ico24 { width: 24px; height: 24px; }
.ico28 { width: 28px; height: 28px; }
.mainmenu .combo { margin: 3px 0 2px; }
.desktop, .radial { padding-left: 8px; gap: 7px; }
.desktop { width: 212px; }
.mainmenu .radial { width: 213px; margin-left: 5px; }
.mainmenu .take { width: 284px; padding-left: 7px; gap: 5px; margin-left: auto; }
.help { width: 23px; height: 23px; margin: 9px 16px 0 15px; border: 2px solid #aaa; border-radius: 50%; background: #222; color: #eee; font-weight: 700; font-size: 16px; line-height: 18px; }

.shelves { height: 96px; border-bottom: 2px solid #0a0a0a; background: #0a0a0a; }
.shelf { display: flex; flex-direction: column; min-width: 0; background: #3d3d3d; }
.shelf.left { width: 1240px; flex: none; }
.shelf.right { flex: 1; margin-right: 2px; border-left: 1px solid #555; }
.gripbar { flex: none; width: 14px; margin: 0 2px; background: radial-gradient(circle, #0a0a0a 1px, transparent 2px) 0 34px / 5px 5px content-box, linear-gradient(90deg, #4a4a4a, #424242); padding: 34px 2px; }
.tabs { display: flex; height: 30px; background: #262626; font-size: 14px; line-height: 24px; white-space: nowrap; }
.tabs button { flex: none; padding: 2px 12px 0; border: solid #0a0a0a; border-width: 0 1px 2px; background: linear-gradient(#333, #292929); box-shadow: inset 0 1px #4a4a4a; text-align: left; }
.tabs .on { background: #494949; border-bottom-color: #494949; border-left: 0; padding-right: 15px; padding-left: 9px; }
.tabs .elided { width: 102px; }
.tabs .add { flex: 1; }
.tabs .add, .tabs .more { border: 0; box-shadow: none; background: none; padding: 0; display: grid; place-items: center; }
.add svg { width: 16px; height: 16px; stroke: #ddd; stroke-width: 4; fill: none; }
.more { width: 26px; }
.more svg, .drop svg, .keydrop svg { width: 10px; height: 9px; fill: #d8d8d8; }
.tools { flex: 1; min-height: 0; display: flex; background: linear-gradient(#494949, #3a3a3a); }
.toolrow { flex: 1; min-width: 0; display: flex; overflow: hidden; padding-left: 26px; }
.toolrow button { flex: none; min-width: 68px; padding: 4px 8px 0; display: flex; flex-direction: column; align-items: center; font-size: 14px; line-height: 15px; }
.toolrow svg { width: 32px; height: 32px; }
.toolrow span { height: 32px; margin-top: -4px; display: flex; align-items: center; text-align: center; white-space: nowrap; }
.toolrow .w114 { width: 114px; }
.toolrow .w110 { width: 110px; }
.toolrow .w50 { min-width: 50px; }
.scroll { flex: none; width: 28px; display: grid; place-items: center; }
.scroll svg { width: 14px; height: 14px; fill: #8c8c8c; }

.work { flex: 1; display: flex; min-height: 0; }
.edge { width: 14px; flex: none; background: linear-gradient(90deg, #3c3c3c, #474747); border-right: 2px solid #0a0a0a; display: flex; align-items: center; }
.edge svg { width: 22px; height: 120px; position: relative; z-index: 1; }
.pane { flex: 1; min-width: 0; display: flex; flex-direction: column; background: #484848; }
.splitter { height: 11px; border-top: 1px solid #777; display: grid; place-items: center; }
.splitter svg { width: 112px; height: 10px; }
.panetabs { display: flex; align-items: stretch; height: 32px; margin-left: 10px; background: #2e2e2e; }
.panetab { width: 165px; background: #494949; display: flex; align-items: center; justify-content: space-between; padding: 0 10px 0 9px; font-size: 15px; }
.panetab b { font-size: 12px; }
.panetabs .add { width: 48px; display: grid; place-items: center; }
.grow { flex: 1; }
.maxi { align-self: center; width: 17px; height: 14px; background: linear-gradient(#eee, #c4c4c4); margin-right: 8px; }
.panetabs .more { display: grid; place-items: center; margin-right: 3px; }
.pathbar { display: flex; align-items: center; height: 55px; padding: 0 8px 0 18px; background: linear-gradient(#4a4a4a, #414141); }
.nav { width: 41px; }
.nav svg { width: 32px; height: 32px; }
.path { flex: 1; height: 40px; margin: 0 9px 0 -1px; display: flex; align-items: center; border: 2px solid #0a0a0a; background: #3c3c3c; box-shadow: inset 0 1px #565656; padding-left: 9px; }
.path a { margin: 0 11px 0 7px; }
.path .chev { width: 10px; height: 36px; margin-right: 9px; }
.drop { margin-left: auto; width: 30px; height: 100%; display: grid; place-items: center; background: #2b2b2b; }
.drop svg, .keydrop svg { fill: #909090; }
.count { width: 38px; height: 38px; border: 2px solid #aaa; border-radius: 50%; line-height: 32px; }
.target { margin-left: 7px; }
.target svg { width: 28px; height: 28px; }
.netmenu { display: flex; height: 42px; margin-left: 11px; border: solid #0a0a0a; border-width: 2px 0; background: linear-gradient(#404040, #343434); }
.netmenu .strip { width: 16px; padding: 3px 2px; }
.neticons { margin-left: auto; display: flex; align-items: center; gap: 14px; padding-right: 7px; }
.neticons .gap { margin-left: 27px; }
.neticons svg { width: 26px; height: 26px; }

.canvas { flex: 1; min-height: 1004px; margin-left: 8px; position: relative; overflow: hidden; background: #2f2f2f; }
.watermark { position: absolute; color: #494949; }
.watermark.center { top: 15px; left: 0; right: 6px; text-align: center; font-size: 32px; line-height: 48px; color: #434343; }
.watermark.corner { top: 24px; right: 20px; font-size: 38px; line-height: 48px; font-weight: 700; color: #4d4d4d; }
.netbox { position: absolute; border-radius: 8px; overflow: hidden; }
.netbox h2 { margin: 0; display: flex; align-items: center; height: 27px; font-size: 18px; line-height: 24px; padding-bottom: 3px; font-weight: 400; color: #e0e0e0; }
.debris { left: 332px; top: 87px; width: 555px; height: 831px; background: #181818; }
.debris h2 { background: #080808; border-bottom: 1px solid #000; }
.netbox i { width: 14px; height: 3px; margin: 0 8px 0 9px; background: #444; }
.major { left: 1253px; top: 90px; width: 894px; height: 738px; background: #504879; border: 1px solid #6554ab; }
.major h2 { background: #6554a6; border-bottom: 1px solid #7463c8; }
.major i { background: #111; }
.graph { position: absolute; left: 0; top: 0; width: 2478px; height: 1005px; }
.node { position: absolute; display: flex; flex-direction: column; font-size: 18px; line-height: 20px; white-space: nowrap; }
.node small { font-size: 17px; color: #5e5e5e; }
.node strong { font-weight: 400; color: #d0d0d0; }
.node a { font-size: 15px; line-height: 22px; color: #6f9bd8; }
.dim small { color: #625f63; }
.dim a { color: #779cd8; }
.node .spaced { margin-top: 10px; }
.badges { height: 20px; display: flex; align-items: center; gap: 6px; padding-left: 4px; }
.badges svg { width: 12px; height: 14px; }
.badges .warn, .badges .tri { width: 15px; }
.lk { color: #6c7474; }
.dim .lk { color: #434a48; }
.n-dop { left: 463px; top: 112px; }
.n-cache { left: 463px; top: 324px; }
.n-revert { left: 463px; top: 507px; }
.n-recolor { left: 717px; top: 531px; }
.n-vis { left: 773px; top: 660px; }
.n-out { left: 451px; top: 846px; }
.n-packed { left: 1545px; top: 160px; }
.n-sim { left: 1816px; top: 258px; }
.n-pieces { left: 1690px; top: 431px; }
.n-coll { left: 1677px; top: 562px; }

.playbar { height: 118px; border-top: 2px solid #626262; border-bottom: 2px solid #050505; background: #2e2e2e; }
.strip.bottom { display: flex; align-items: flex-end; }
.controls { flex: 1; min-width: 0; padding: 12px 0 0 8px; display: flex; flex-direction: column; gap: 13px; }
.line { display: flex; align-items: center; }
.group { display: flex; gap: 2px; }
.group button { width: 43px; height: 45px; display: grid; place-items: center; background: linear-gradient(#505050, #3c3c3c); border: solid #111; border-width: 1px 1px 2px 0; box-shadow: inset 1px 1px #5a5a5a; }
.group svg { width: 34px; height: 22px; fill: #e0e0e0; }
.group .blue { background: #637ea8; }
.two .group button { height: 39px; }
.two .group svg { height: 30px; }
.half { margin-left: 4px; gap: 1px; }
.group.half button { width: 22px; }
.group.half svg { width: 14px; height: 14px; }
.one .num { width: 75px; height: 44px; margin-left: 6px; }
.num { width: 68px; height: 33px; padding-left: 4px; background: #121212; color: #d0d0d0; font: 19px/24px "Liberation Mono", monospace; border: 1px solid #262626; }
.num.soft { background: #232323; }
.timeline { flex: 1; height: 45px; margin-left: 9px; position: relative; font-size: 15px; line-height: 20px; color: #8c8c8c; }
.timeline svg { width: 100%; height: 44px; margin-top: 3px; }
.timeline span { position: absolute; top: -14px; }
.marker { position: absolute; top: -9px; transform: translateX(-50%); border: 2px solid #e8e8e8; background: #050505; color: #eee; font: 19px/26px "Liberation Mono", monospace; padding: 0 3px; }
.marker::after { content: ""; position: absolute; left: 50%; top: 100%; margin-left: -8px; border: 8px solid transparent; border-top-color: #e8e8e8; border-bottom: 0; }
.faint { margin-left: 8px; gap: 0; }
.two .faint button { width: 37px; background: #343434; box-shadow: none; }
.two .faint svg { width: 16px; height: 14px; }
.range { flex: 1; display: flex; align-items: center; gap: 6px; margin-left: 14px; }
.slider { flex: 1; display: flex; align-items: center; margin: 0 -2px; }
.slider svg { width: 11px; height: 18px; fill: #b0b0b0; }
.slider i { flex: 1; height: 5px; background: #6d6d6d; }
.keyer { flex: none; width: 101px; display: flex; align-items: center; padding: 0 0 2px 5px; }
.key { width: 67px; height: 67px; border-radius: 50%; background: #303030; border: 1px solid #181818; display: grid; place-items: center; z-index: 1; }
.key svg { width: 32px; height: 32px; }
.keydrop { width: 30px; height: 33px; margin: -4px 0 0 -7px; padding-left: 2px; background: linear-gradient(#444, #343434); border: 1px solid #1a1a1a; display: grid; place-items: center; }
.channels { flex: none; width: 316px; padding: 12px 10px 0 5px; display: flex; flex-direction: column; gap: 6px; }
.chrow { display: flex; align-items: center; gap: 9px; }
.sq { width: 39px; height: 40px; background: linear-gradient(#505050, #3c3c3c); border: solid #111; border-width: 1px 1px 2px; display: grid; place-items: center; }
.sq svg { width: 28px; height: 28px; }
.keys { flex: 1; height: 40px; display: flex; align-items: center; padding: 0 9px 2px 28px; justify-content: space-between; background: linear-gradient(#545454, #3c3c3c); border: solid #111; border-width: 1px 1px 2px; }
.keys svg { width: 12px; height: 12px; fill: #8e8e8e; }
.keyall { flex: 1; height: 36px; padding-left: 22px; margin-left: -4px; margin-right: 4px; border-bottom: 2px solid #111; }
.keyall i { width: 36px; }

.status { display: flex; justify-content: flex-end; height: 40px; padding: 0 3px 3px 0; background: #191919; }
.cook { width: 42px; display: grid; place-items: center; background: #2d2d2d; }
.cook svg { width: 32px; height: 32px; }
.obj { width: 212px; padding-left: 25px; }
.status .combo i { width: 39px; }
.refresh { width: 46px; display: grid; place-items: center; background: #333; }
.refresh svg { width: 26px; height: 24px; }
.update { width: 192px; padding-left: 25px; }
```
